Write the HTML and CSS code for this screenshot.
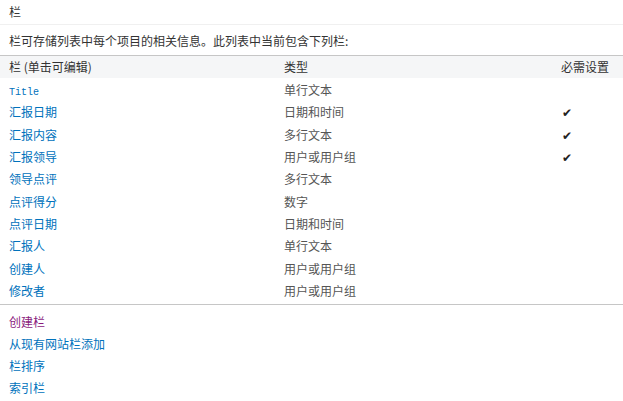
FILE: index.html
```html
<!DOCTYPE html>
<html lang="zh-CN">

<head>
    <meta charset="UTF-8">
    <meta name="viewport" content="width=device-width, initial-scale=1.0">
    <title>栏</title>
    <link rel="stylesheet" href="styles.css">
</head>

<body>
    <div class="page">
        <!-- Section title -->
        <div class="section-title">栏</div>
        <div class="description">栏可存储列表中每个项目的相关信息。此列表中当前包含下列栏:</div>

        <!-- Column list -->
        <div class="column-table">
            <div class="row header">
                <div class="cell">栏 (单击可编辑)</div>
                <div class="cell">类型</div>
                <div class="cell">必需设置</div>
            </div>
            <div class="row">
                <div class="cell"><a class="mono" href="#">Title</a></div>
                <div class="cell type">单行文本</div>
                <div class="cell"></div>
            </div>
            <div class="row">
                <div class="cell"><a href="#">汇报日期</a></div>
                <div class="cell type">日期和时间</div>
                <div class="cell check">&#10004;</div>
            </div>
            <div class="row">
                <div class="cell"><a href="#">汇报内容</a></div>
                <div class="cell type">多行文本</div>
                <div class="cell check">&#10004;</div>
            </div>
            <div class="row">
                <div class="cell"><a href="#">汇报领导</a></div>
                <div class="cell type">用户或用户组</div>
                <div class="cell check">&#10004;</div>
            </div>
            <div class="row">
                <div class="cell"><a href="#">领导点评</a></div>
                <div class="cell type">多行文本</div>
                <div class="cell"></div>
            </div>
            <div class="row">
                <div class="cell"><a href="#">点评得分</a></div>
                <div class="cell type">数字</div>
                <div class="cell"></div>
            </div>
            <div class="row">
                <div class="cell"><a href="#">点评日期</a></div>
                <div class="cell type">日期和时间</div>
                <div class="cell"></div>
            </div>
            <div class="row">
                <div class="cell"><a href="#">汇报人</a></div>
                <div class="cell type">单行文本</div>
                <div class="cell"></div>
            </div>
            <div class="row">
                <div class="cell"><a href="#">创建人</a></div>
                <div class="cell type">用户或用户组</div>
                <div class="cell"></div>
            </div>
            <div class="row">
                <div class="cell"><a href="#">修改者</a></div>
                <div class="cell type">用户或用户组</div>
                <div class="cell"></div>
            </div>
        </div>

        <!-- Actions -->
        <div class="actions">
            <a class="visited" href="#">创建栏</a>
            <a href="#">从现有网站栏添加</a>
            <a href="#">栏排序</a>
            <a href="#">索引栏</a>
        </div>
    </div>
</body>

</html>
```

FILE: styles.css
```css
body {
    margin: 0;
    background: #FFFFFF;
    font-family: "Noto Sans CJK SC", "Liberation Sans", sans-serif;
    font-size: 12px;
    color: #444444;
}

a {
    color: #0072BC;
    text-decoration: none;
}

.section-title {
    height: 24px;
    line-height: 24px;
    padding-left: 9px;
    color: #333333;
    border-bottom: 1px solid #F0F0F0;
}

.description {
    height: 30px;
    line-height: 31px;
    padding-left: 9px;
    color: #333333;
}

/* Column table */
.column-table {
    border-top: 1px solid #C6C6C6;
    border-bottom: 1px solid #C6C6C6;
    padding-bottom: 2px;
}

.row {
    display: grid;
    grid-template-columns: 275px 277px 1fr;
    height: 22.33px;
    line-height: 22px;
    padding-left: 9px;
}

.row.header {
    height: 22px;
    background: #F5F6F7;
    color: #333333;
    margin-bottom: 1px;
}

.type {
    color: #555555;
}

.check {
    font-size: 12px;
    color: #222222;
    padding-left: 1px;
}

.mono {
    font-family: "Liberation Mono", monospace;
    font-size: 10px;
}

/* Actions */
.actions {
    display: flex;
    flex-direction: column;
    padding: 6px 0 0 9px;
}

.actions a {
    height: 22px;
    line-height: 22px;
}

.actions a.visited {
    color: #8A1A7D;
}
```
